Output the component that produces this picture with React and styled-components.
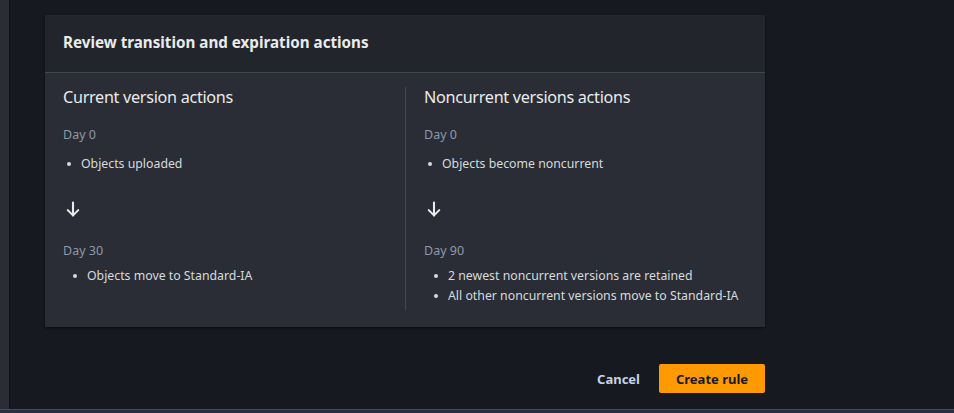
import React from 'react';
import styled, { createGlobalStyle } from 'styled-components';

const GlobalStyle = createGlobalStyle`
  html, body {
    margin: 0;
    padding: 0;
    background-color: #161920;
    font-family: "Noto Sans", "Open Sans", Arial, sans-serif;
  }
`;

const PageFrame = styled.div`
  display: flex;
  flex-direction: column;
  height: 413px;
  overflow: hidden;
`;

const Workspace = styled.div`
  flex: 1;
  display: flex;
  min-height: 0;
`;

const SideStrip = styled.div`
  width: 9px;
  background-color: #2a2d35;
  border-right: 1px solid #0f1116;
`;

const Main = styled.main`
  flex: 1;
  padding: 15px 0 0 35px;
`;

const Content = styled.div`
  width: 720px;
`;

const Card = styled.section`
  background-color: #2a2d35;
  box-shadow: 0 1px 2px rgba(0, 0, 0, 0.6);
`;

const CardHeader = styled.header`
  height: 58px;
  box-sizing: border-box;
  display: flex;
  align-items: center;
  padding: 0 18px 4px;
  background-color: #22252c;
  border-bottom: 1px solid #414750;
`;

const CardTitle = styled.h2`
  margin: 0;
  font-size: 15.2px;
  font-weight: 700;
  color: #e9ebed;
`;

const CardBody = styled.div`
  display: grid;
  grid-template-columns: 1fr 1fr;
  padding: 14px 18px 17px;
`;

const Column = styled.div`
  padding: 0 0 4px ${(p) => (p.divided ? '18px' : '0')};
  border-left: ${(p) => (p.divided ? '1px solid #414750' : 'none')};
`;

const ColumnTitle = styled.h3`
  margin: 0 0 19px;
  font-size: 16.2px;
  line-height: 20px;
  letter-spacing: -0.3px;
  font-weight: 400;
  color: #e9ebed;
`;

const DayLabel = styled.div`
  font-size: 12.5px;
  line-height: 18px;
  color: #8d99a8;
  margin-bottom: ${(p) => p.gap}px;
`;

const ActionList = styled.ul`
  list-style: none;
  margin: 0;
  padding: 0 0 0 ${(p) => p.indent}px;
`;

const ActionItem = styled.li`
  display: flex;
  align-items: center;
  gap: 10px;
  font-size: 12.3px;
  line-height: 20px;
  color: #d5dbdb;

  &::before {
    content: '';
    width: 4px;
    height: 4px;
    border-radius: 50%;
    background-color: #d5dbdb;
    flex-shrink: 0;
  }
`;

const ArrowRow = styled.div`
  height: 18px;
  margin: 26px 0 24px 1px;
  color: #e9ebed;
  display: flex;
`;

const Actions = styled.div`
  display: flex;
  justify-content: flex-end;
  align-items: center;
  gap: 19px;
  margin-top: 37px;
`;

const LinkButton = styled.button`
  background: none;
  border: none;
  padding: 0;
  font-family: inherit;
  font-size: 13px;
  font-weight: 700;
  color: #c6d3e1;
  cursor: pointer;
`;

const PrimaryButton = styled.button`
  width: 106px;
  height: 29px;
  border: none;
  border-radius: 2px;
  background-color: #ff9900;
  font-family: inherit;
  font-size: 13px;
  font-weight: 700;
  color: #16191f;
  cursor: pointer;
`;

const BottomBar = styled.div`
  height: 3px;
  background-color: #2b3142;
  border-top: 1px solid #414a5e;
`;

const ArrowDown = () => (
  <svg width="18" height="18" viewBox="0 0 24 24" fill="none" stroke="currentColor" strokeWidth="2.8" strokeLinecap="round" strokeLinejoin="round">
    <path d="M12 3.5v17" />
    <path d="m19 13.5-7 7-7-7" />
  </svg>
);

const columns = [
  {
    title: 'Current version actions',
    start: 'Objects uploaded',
    day: 'Day 30',
    items: ['Objects move to Standard-IA'],
  },
  {
    title: 'Noncurrent versions actions',
    start: 'Objects become noncurrent',
    day: 'Day 90',
    items: ['2 newest noncurrent versions are retained', 'All other noncurrent versions move to Standard-IA'],
  },
];

const App = () => (
  <PageFrame>
    <GlobalStyle />
    <Workspace>
      <SideStrip />
      <Main>
        <Content>
          <Card>
            <CardHeader>
              <CardTitle>Review transition and expiration actions</CardTitle>
            </CardHeader>
            <CardBody>
              {columns.map((col, i) => (
                <Column key={col.title} divided={i > 0}>
                  <ColumnTitle>{col.title}</ColumnTitle>
                  <DayLabel gap={10}>Day 0</DayLabel>
                  <ActionList indent={4}>
                    <ActionItem>{col.start}</ActionItem>
                  </ActionList>
                  <ArrowRow>
                    <ArrowDown />
                  </ArrowRow>
                  <DayLabel gap={6}>{col.day}</DayLabel>
                  <ActionList indent={10}>
                    {col.items.map((item) => (
                      <ActionItem key={item}>{item}</ActionItem>
                    ))}
                  </ActionList>
                </Column>
              ))}
            </CardBody>
          </Card>
          <Actions>
            <LinkButton>Cancel</LinkButton>
            <PrimaryButton>Create rule</PrimaryButton>
          </Actions>
        </Content>
      </Main>
    </Workspace>
    <BottomBar />
  </PageFrame>
);

export default App;
